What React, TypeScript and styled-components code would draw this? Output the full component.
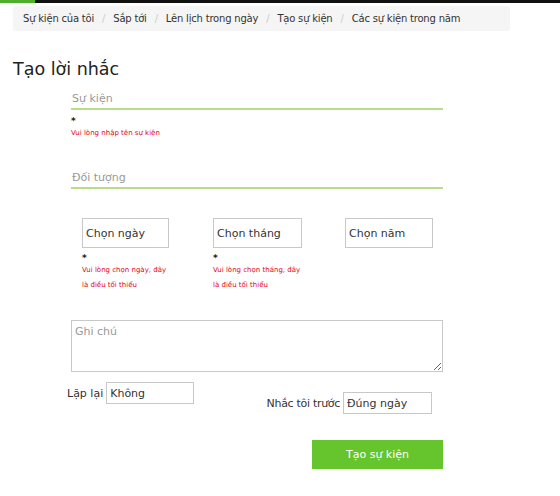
import styled, { createGlobalStyle } from "styled-components";

const GlobalStyle = createGlobalStyle`
  body {
    margin: 0;
    background: #fff;
    font-family: "DejaVu Sans", Verdana, sans-serif;
    color: #333;
  }
`;

const TopBar = styled.div`
  height: 3px;
  background: #111;
  display: flex;
`;

const TopBarAccent = styled.div`
  width: 35px;
  background: #4fae2c;
`;

const Page = styled.div`
  padding: 3px 0 0 13px;
  width: 497px;
`;

const Breadcrumb = styled.ol`
  list-style: none;
  margin: 0;
  padding: 0 10px;
  height: 25px;
  display: flex;
  align-items: center;
  background: #f5f5f5;
  border-radius: 2px;
  font-size: 10px;
  letter-spacing: -0.2px;
  color: #333;
  white-space: nowrap;
`;

const Crumb = styled.li`
  display: flex;
  align-items: center;

  & + &::before {
    content: "/";
    color: #ccc;
    padding: 0 8px;
  }
`;

const Title = styled.h1`
  margin: 27px 0 0;
  font-size: 17.5px;
  font-weight: 400;
  line-height: 23px;
  color: #222;
`;

const Form = styled.form`
  margin-left: 58px;
  width: 372px;
  display: flex;
  flex-direction: column;
`;

const LineInput = styled.input<{ $top: number }>`
  margin-top: ${(p) => p.$top}px;
  border: none;
  border-bottom: 2px solid #b8dc8c;
  outline: none;
  padding: 0 1px;
  height: 19px;
  font-family: inherit;
  font-size: 11px;
  color: #333;
  background: transparent;

  &::placeholder {
    color: #999;
  }
`;

const Required = styled.div<{ $top?: number }>`
  font-size: 9px;
  line-height: 10px;
  font-weight: 700;
  color: #222;
  margin-top: ${(p) => p.$top ?? 6}px;
`;

const ErrorText = styled.div`
  font-size: 7px;
  line-height: 15px;
  color: #e2001b;
`;

const DateRow = styled.div`
  display: grid;
  grid-template-columns: 131px 132px 88px;
  padding-left: 11px;
  margin-top: 29px;
  align-items: start;
`;

const DateCol = styled.div`
  display: flex;
  flex-direction: column;
  width: 90px;
`;

const BoxInput = styled.input<{ $w: number; $h: number }>`
  box-sizing: border-box;
  width: ${(p) => p.$w}px;
  height: ${(p) => p.$h}px;
  border: 1px solid #c8c8c8;
  padding: 0 3px;
  font-family: inherit;
  font-size: 11px;
  color: #333;
  outline: none;

  &::placeholder {
    color: #333;
  }
`;

const Notes = styled.textarea`
  box-sizing: border-box;
  margin-top: 27px;
  height: 52px;
  border: 1px solid #c8c8c8;
  padding: 4px 3px;
  font-family: inherit;
  font-size: 11px;
  resize: vertical;
  outline: none;

  &::placeholder {
    color: #999;
  }
`;

const OptionRow = styled.div`
  display: flex;
  align-items: flex-start;
  justify-content: space-between;
  margin: 10px 11px 0 -4px;
`;

const Field = styled.label<{ $offset?: number }>`
  display: flex;
  align-items: center;
  gap: 3px;
  font-size: 11px;
  letter-spacing: ${(p) => (p.$offset ? -0.3 : 0)}px;
  color: #333;
  margin-top: ${(p) => p.$offset ?? 0}px;
`;

const Submit = styled.button`
  align-self: flex-end;
  margin-top: 26px;
  width: 131px;
  height: 29px;
  border: none;
  background: #66c42c;
  color: #fff;
  font-family: inherit;
  font-size: 11px;
  cursor: pointer;
`;

const App = () => {
  return (
    <>
      <GlobalStyle />
      <TopBar>
        <TopBarAccent />
      </TopBar>
      <Page>
        <Breadcrumb>
          <Crumb>Sự kiện của tôi</Crumb>
          <Crumb>Sắp tới</Crumb>
          <Crumb>Lên lịch trong ngày</Crumb>
          <Crumb>Tạo sự kiện</Crumb>
          <Crumb>Các sự kiện trong năm</Crumb>
        </Breadcrumb>
        <Title>Tạo lời nhắc</Title>
        <Form onSubmit={(e) => e.preventDefault()}>
          <LineInput $top={8} placeholder="Sự kiện" />
          <Required>*</Required>
          <ErrorText>Vui lòng nhập tên sự kiện</ErrorText>
          <LineInput $top={27} placeholder="Đối tượng" />
          <DateRow>
            <DateCol>
              <BoxInput $w={87} $h={30} placeholder="Chọn ngày" />
              <Required $top={5}>*</Required>
              <ErrorText>Vui lòng chọn ngày, đây là điều tối thiểu</ErrorText>
            </DateCol>
            <DateCol>
              <BoxInput $w={89} $h={30} placeholder="Chọn tháng" />
              <Required $top={5}>*</Required>
              <ErrorText>Vui lòng chọn tháng, đây là điều tối thiểu</ErrorText>
            </DateCol>
            <DateCol>
              <BoxInput $w={88} $h={30} placeholder="Chọn năm" />
            </DateCol>
          </DateRow>
          <Notes placeholder="Ghi chú" />
          <OptionRow>
            <Field>
              Lặp lại
              <BoxInput $w={88} $h={22} defaultValue="Không" />
            </Field>
            <Field $offset={10}>
              Nhắc tôi trước
              <BoxInput $w={89} $h={22} defaultValue="Đúng ngày" />
            </Field>
          </OptionRow>
          <Submit type="submit">Tạo sự kiện</Submit>
        </Form>
      </Page>
    </>
  );
};

export default App;
